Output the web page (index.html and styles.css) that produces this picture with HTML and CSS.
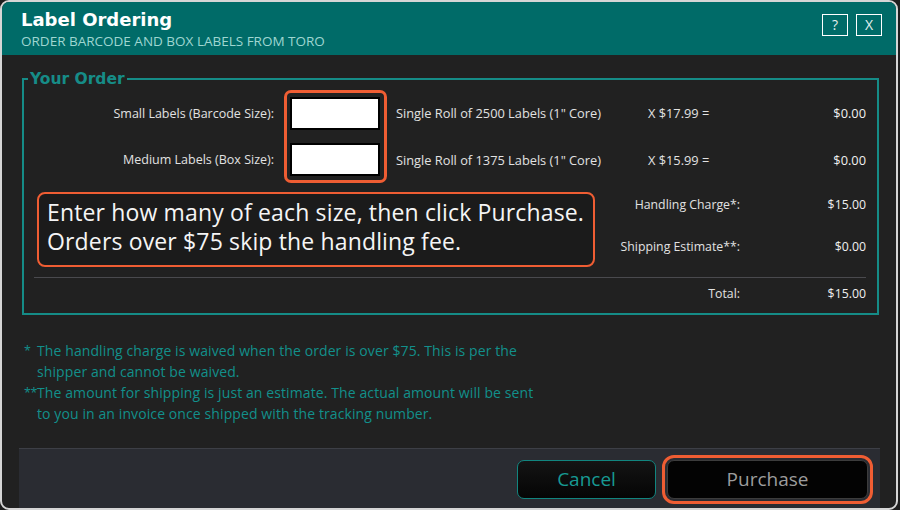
FILE: index.html
```html
<!DOCTYPE html>
<html lang="en">
<head>
<meta charset="utf-8">
<title>Label Ordering</title>
<link rel="stylesheet" href="styles.css">
</head>
<body>
<div class="window">
  <header class="titlebar">
    <div class="titles">
      <h1 class="title">Label Ordering</h1>
      <p class="subtitle">ORDER BARCODE AND BOX LABELS FROM TORO</p>
    </div>
    <div class="win-btns">
      <button class="win-btn" type="button">?</button>
      <button class="win-btn" type="button">X</button>
    </div>
  </header>

  <main class="content">
    <fieldset class="order">
      <legend class="legend">Your Order</legend>

      <div class="items">
        <span class="lbl row1">Small Labels (Barcode Size):</span>
        <div class="qty-frame">
          <input class="qty" type="text" aria-label="Small labels quantity">
          <input class="qty" type="text" aria-label="Medium labels quantity">
        </div>
        <span class="desc row1">Single Roll of 2500 Labels (1" Core)</span>
        <span class="price row1">X $17.99 =</span>
        <span class="amt row1">$0.00</span>

        <span class="lbl row2">Medium Labels (Box Size):</span>
        <span class="desc row2">Single Roll of 1375 Labels (1" Core)</span>
        <span class="price row2">X $15.99 =</span>
        <span class="amt row2">$0.00</span>
      </div>

      <div class="mid">
        <div class="callout">Enter how many of each size, then click Purchase.<br>Orders over $75 skip the handling fee.</div>
        <div class="charges">
          <span class="clbl">Handling Charge*:</span>
          <span class="amt">$15.00</span>
          <span class="clbl">Shipping Estimate**:</span>
          <span class="amt">$0.00</span>
        </div>
      </div>

      <hr class="sep">

      <div class="total-row">
        <span class="clbl">Total:</span>
        <span class="amt">$15.00</span>
      </div>
    </fieldset>

    <div class="notes">
      <span class="mark">*</span>
      <span class="note">The handling charge is waived when the order is over $75. This is per the<br>shipper and cannot be waived.</span>
      <span class="mark">**</span>
      <span class="note">The amount for shipping is just an estimate. The actual amount will be sent<br>to you in an invoice once shipped with the tracking number.</span>
    </div>
  </main>

  <footer class="actions">
    <button class="btn btn-cancel" type="button">Cancel</button>
    <button class="btn btn-purchase" type="button">Purchase</button>
  </footer>
</div>
</body>
</html>
```

FILE: styles.css
```css
html, body {
  margin: 0;
  padding: 0;
}

body {
  width: 900px;
  height: 510px;
  overflow: hidden;
  background: #1e1e1e;
  font-family: "Open Sans", "Noto Sans", sans-serif;
  color: #e2e2e2;
}

.window {
  width: 898px;
  height: 510px;
  box-sizing: border-box;
  border: 2px solid #d6d6d6;
  border-radius: 9px;
  background: #212121;
  overflow: hidden;
  display: flex;
  flex-direction: column;
}

/* ---------- title bar ---------- */
.titlebar {
  flex: none;
  height: 53px;
  background: #006b68;
  display: flex;
  justify-content: space-between;
  align-items: flex-start;
  padding: 0 14px 0 19px;
}

.title {
  margin: 0;
  padding-top: 7px;
  font-family: "DejaVu Sans", Verdana, sans-serif;
  font-weight: bold;
  font-size: 18px;
  line-height: 22px;
  color: #ffffff;
}

.subtitle {
  margin: 2px 0 0;
  font-size: 13.5px;
  line-height: 16px;
  color: #9fd6d1;
}

.win-btns {
  display: flex;
  gap: 8px;
  margin-top: 12px;
}

.win-btn {
  width: 26px;
  height: 22px;
  box-sizing: border-box;
  border: 1.5px solid #ffffff;
  background: transparent;
  color: #e4f1f0;
  font-family: "Open Sans", sans-serif;
  font-size: 14px;
  line-height: 18px;
  padding: 0;
}

/* ---------- main content ---------- */
.content {
  flex: none;
  padding: 0 17px 0 20px;
}

.order {
  margin: 15px 0 0;
  padding: 0 11px 8px 0;
  border: 2px solid #158c87;
  min-width: 0;
}

.legend {
  margin-left: 4px;
  padding: 0 2px;
  font-family: "DejaVu Sans", Verdana, sans-serif;
  font-weight: bold;
  font-size: 15.5px;
  line-height: 18px;
  color: #168c87;
}

.items {
  margin-top: 2px;
  display: grid;
  grid-template-columns: 260px 112px 252px 1fr auto;
  grid-template-rows: 46.5px 46.5px;
  font-size: 12.8px;
}

.items > span {
  align-self: center;
}

.row1 { grid-row: 1; }
.row2 { grid-row: 2; }

.lbl {
  grid-column: 1;
  justify-self: end;
  padding-right: 10px;
  font-size: 12.5px;
}

.desc { grid-column: 3; }
.price { grid-column: 4; }

.items .amt {
  grid-column: 5;
  justify-self: end;
}

.amt {
  color: #f0f0f0;
}

.qty-frame {
  grid-column: 2;
  grid-row: 1 / 3;
  width: 103px;
  box-sizing: border-box;
  border: 3px solid #ef5d33;
  border-radius: 7px;
  padding: 4px 4px 4px 3px;
  display: flex;
  flex-direction: column;
  gap: 13px;
}

.qty {
  width: 90px;
  height: 33px;
  box-sizing: border-box;
  border: 2px solid #000000;
  background: #ffffff;
  margin: 0;
  padding: 0 4px;
  font-size: 13px;
}

.mid {
  margin-top: 9px;
  display: flex;
  align-items: flex-start;
}

.callout {
  flex: none;
  margin-left: 13px;
  width: 558px;
  height: 75px;
  box-sizing: border-box;
  border: 2px solid #ef5d33;
  border-radius: 8px;
  background: #1b1b1b;
  padding: 4px 0 0 8px;
  font-size: 23px;
  line-height: 29px;
  color: #f5f5f5;
  letter-spacing: 0.15px;
  white-space: nowrap;
}

.charges,
.total-row {
  flex: 1;
  display: grid;
  grid-template-columns: 1fr 126px;
  grid-auto-rows: 24px;
  font-size: 12.3px;
  align-items: center;
}

.charges {
  row-gap: 18px;
}

.clbl,
.charges .amt,
.total-row .amt {
  justify-self: end;
}

.sep {
  margin: 10px 0 0 10px;
  border: 0;
  height: 1px;
  background: #4a4a4e;
}

.total-row {
  margin-top: 3px;
}

/* ---------- footnotes ---------- */
.notes {
  margin-top: 25px;
  padding-left: 2px;
  display: grid;
  grid-template-columns: 13px auto;
  font-size: 14px;
  line-height: 21px;
  letter-spacing: 0.1px;
  color: #12908b;
}

.mark {
  font-size: 12.5px;
  letter-spacing: -0.5px;
}

/* ---------- footer ---------- */
.actions {
  margin: auto 16px 0 17px;
  height: 60px;
  box-sizing: border-box;
  background: #2a2c32;
  border-top: 1px solid #3d3f46;
  display: flex;
  justify-content: flex-end;
  align-items: flex-start;
  gap: 11px;
  padding: 11px 12px 0 0;
}

.btn {
  height: 39px;
  box-sizing: border-box;
  border-radius: 7px;
  font-family: "Open Sans", sans-serif;
  font-size: 19px;
  line-height: 1;
  padding: 0;
}

.btn-cancel {
  width: 139px;
  border: 1.5px solid #11857f;
  background: linear-gradient(#141414, #050505);
  color: #179a93;
}

.btn-purchase {
  width: 201px;
  border: 1.5px solid #3c3c3c;
  background: #030303;
  color: #9c9c9c;
  outline: 3px solid #ef5d33;
  outline-offset: 2px;
}
```
